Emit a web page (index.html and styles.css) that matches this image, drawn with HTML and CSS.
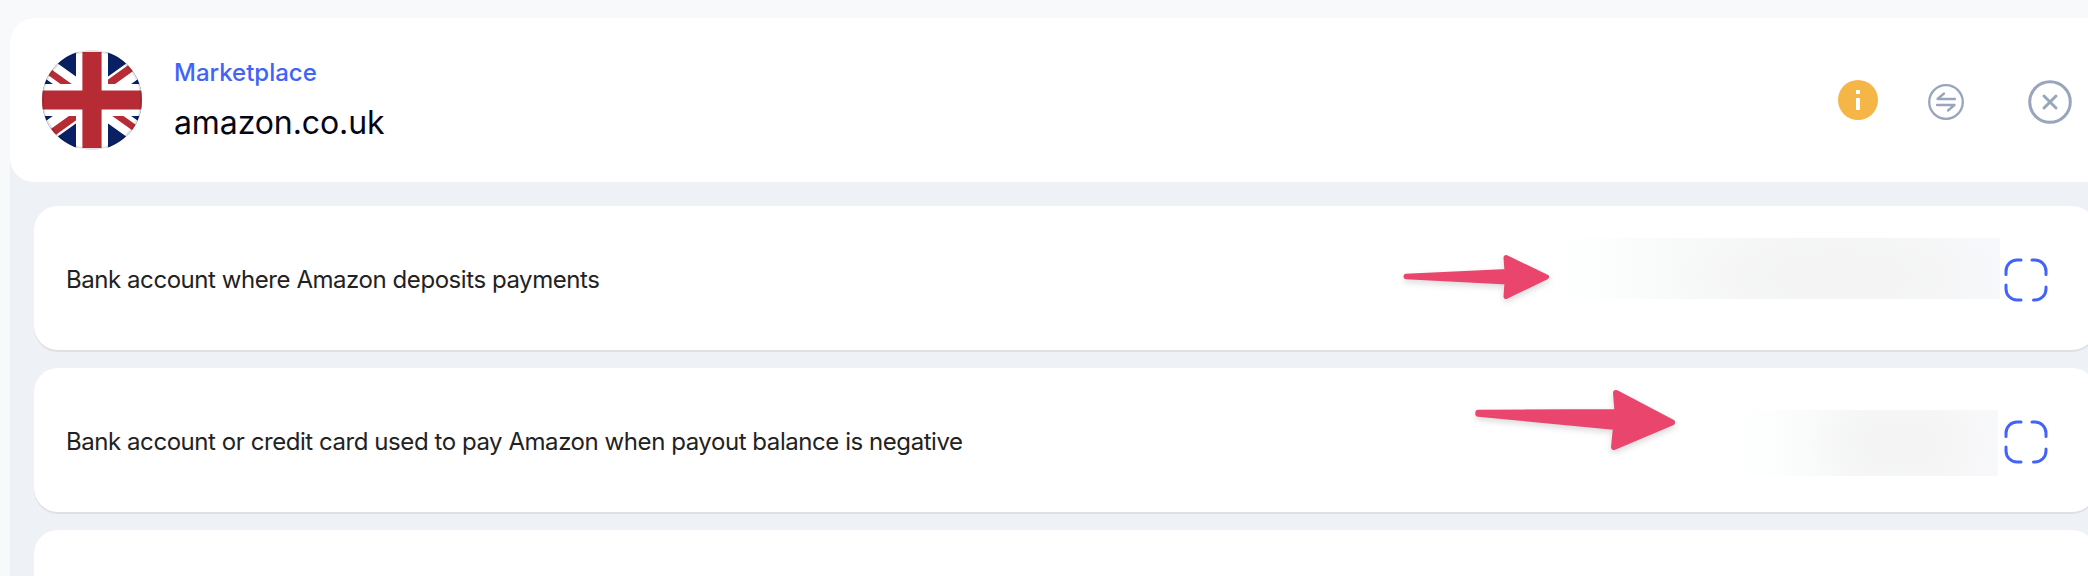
FILE: index.html
```
<!DOCTYPE html>
<html lang="en">
<head>
  <meta charset="UTF-8" />
  <meta name="viewport" content="width=device-width, initial-scale=1" />
  <title>Marketplace | amazon.co.uk</title>
  <link rel="stylesheet" href="styles.css">
</head>
<body>
  <main class="panel">
    <!-- Marketplace Header -->
    <header class="panel-header">
      <svg class="flag" viewBox="-50 -50 100 100">
        <defs>
          <clipPath id="flagClip"><circle r="50" /></clipPath>
        </defs>
        <g clip-path="url(#flagClip)">
          <rect x="-50" y="-50" width="100" height="100" fill="#fff" />
          <rect x="-50" y="-48" width="100" height="96" fill="#0a2065" />
          <path d="M-67.2-48L67.2 48M-67.2 48L67.2-48" stroke="#fff" stroke-width="19.4" />
          <g fill="#b72b34">
            <path d="M0-1.5L-60-44.4V-36.4L0 6.5z" />
            <path d="M0-9L60-51.9V-42.4L0 .5z" />
            <path d="M0-.5L-60 42.4V51.9L0 9z" />
            <path d="M0-6.5L60 36.4V44.4L0 1.5z" />
          </g>
          <path d="M-16-50H16V-16H50V16H16V50H-16V16H-50V-16H-16z" fill="#fff" />
          <path d="M-9.6-48H9.6V-9.6H50V9.6H9.6V48H-9.6V9.6H-50V-9.6H-9.6z" fill="#b72b34" />
        </g>
        <circle r="49" fill="none" stroke="#000" stroke-opacity="0.1" stroke-width="2" />
      </svg>

      <div class="title">
        <span class="title-label">Marketplace</span>
        <h1>amazon.co.uk</h1>
      </div>

      <div class="actions">
        <button class="icon-btn info" aria-label="Info">
          <svg width="40" height="40" viewBox="0 0 40 40">
            <circle cx="20" cy="20" r="20" fill="#f6b547" />
            <path d="M18 10h4v4h-4zM18 18h4v12h-4z" fill="#fff" />
          </svg>
        </button>
        <button class="icon-btn switch" aria-label="Switch marketplace">
          <svg width="36" height="36" viewBox="0 0 36 36">
            <circle cx="18" cy="18" r="16.8" />
            <path d="M27 15H9.5L16 9.5M9 21H26.5L20 26.5" />
          </svg>
        </button>
        <button class="icon-btn close" aria-label="Close">
          <svg width="44" height="44" viewBox="0 0 44 44">
            <circle cx="22" cy="22" r="20.3" />
            <path d="M16 16L28 28M28 16L16 28" />
          </svg>
        </button>
      </div>
    </header>

    <!-- Payment Methods -->
    <section class="cards">
      <div class="card">
        <span class="card-label">Bank account where Amazon deposits payments</span>
        <div class="hidden-value deposit"></div>
        <button class="icon-btn expand" aria-label="Expand">
          <svg width="44" height="44" viewBox="0 0 44 44">
            <path d="M17 2H13A11 11 0 0 0 2 13V16.5M28 2H31A11 11 0 0 1 42 13V16.5M2 27V31A11 11 0 0 0 13 42H17M42 29V31A11 11 0 0 1 31 42H29.5" />
          </svg>
        </button>
        <svg class="arrow arrow-deposit" width="150" height="60" viewBox="0 0 150 60">
          <path d="M4 28.300L105 23.500L104 9.500L144.500 29L104 48.500L105 34L4 28.700z" />
        </svg>
      </div>

      <div class="card">
        <span class="card-label">Bank account or credit card used to pay Amazon when payout balance is negative</span>
        <div class="hidden-value charge"></div>
        <button class="icon-btn expand" aria-label="Expand">
          <svg width="44" height="44" viewBox="0 0 44 44">
            <path d="M17 2H13A11 11 0 0 0 2 13V16.5M28 2H31A11 11 0 0 1 42 13V16.5M2 27V31A11 11 0 0 0 13 42H17M42 29V31A11 11 0 0 1 31 42H29.5" />
          </svg>
        </button>
        <svg class="arrow arrow-charge" width="210" height="66" viewBox="0 0 210 66">
          <path d="M8.300 24.700L147.500 24L146 5L202 34.500L144 59L146 39L8.300 25.700z" />
        </svg>
      </div>

      <div class="card"></div>
    </section>
  </main>
</body>
</html>
```
FILE: styles.css
```
* {
  box-sizing: border-box;
}

body {
  margin: 0;
  padding: 18px 0 0 10px;
  height: 100vh;
  overflow: hidden;
  font-family: Inter, "Liberation Sans", sans-serif;
  background: #f8f9fb;
  color: #222;
}

.panel {
  width: 2110px;
  height: calc(100vh - 18px);
  overflow: hidden;
  background: #eef1f6;
  border-radius: 24px 24px 0 0;
}

.panel-header {
  display: flex;
  align-items: center;
  height: 164px;
  padding: 0 48px 0 32px;
  background: #fff;
  border-radius: 24px;
}

.flag {
  width: 100px;
  height: 100px;
  margin-right: 32px;
}

.title {
  display: flex;
  flex-direction: column;
  gap: 12px;
  margin-bottom: 2px;
}

.title-label {
  font-size: 24px;
  line-height: 36px;
  font-weight: 500;
  color: #4263f9;
}

.title h1 {
  margin: 0;
  font-size: 32px;
  line-height: 40px;
  font-weight: 400;
  letter-spacing: -0.1px;
  color: #020617;
}

.actions {
  display: flex;
  align-items: center;
  margin-left: auto;
}

.icon-btn {
  display: flex;
  padding: 0;
  background: none;
  border: none;
  cursor: pointer;
}

.icon-btn svg {
  fill: none;
  stroke-linecap: round;
  stroke-linejoin: round;
}

.switch {
  margin: 4px 64px 0 50px;
}

.switch svg {
  stroke: #98a5bc;
  stroke-width: 2.3;
}

.close {
  margin-top: 4px;
}

.close svg {
  stroke: #98a5bc;
  stroke-width: 3;
}

.cards {
  display: flex;
  flex-direction: column;
  gap: 18px;
  padding: 24px 24px 0;
}

.card {
  position: relative;
  display: flex;
  align-items: center;
  height: 144px;
  padding: 0 48px 0 32px;
  background: #fff;
  border-radius: 24px;
  box-shadow: 0 2px 0 #dfe0e3;
}

.card-label {
  font-size: 24px;
  line-height: 36px;
  letter-spacing: -0.44px;
  margin-right: auto;
  padding-top: 3px;
}

.expand {
  margin: 4px 0 0 4px;
}

.expand svg {
  stroke: #4263f9;
  stroke-width: 3;
}

/* Masked account details */
.deposit {
  width: 470px;
  height: 61px;
  margin-bottom: 19px;
  background: radial-gradient(ellipse 170px 60px at 310px 38px, #f4f4f4 20%, rgba(244, 244, 244, 0) 100%),
              linear-gradient(90deg, #fff 0%, #fdfefe 14%, #f8f9f9 30%, #f6f7f7 50%, #f6f7f7 80%, #f7f8fb 100%);
}

.charge {
  width: 294px;
  height: 66px;
  margin: 6px 2px 0 0;
  background: radial-gradient(ellipse 90px 55px at 195px 34px, #f4f4f4 20%, rgba(244, 244, 244, 0) 100%),
              linear-gradient(90deg, #fff 0%, #fdfefe 22%, #f8f9f9 42%, #f6f7f7 55%, #f7f7f8 80%, #f7f8fb 100%);
}

/* Pointer arrows, drawn over the cards */
.arrow {
  position: absolute;
  fill: #ea466d;
  stroke: #ea466d;
  stroke-width: 5;
  stroke-linejoin: round;
  overflow: visible;
  filter: drop-shadow(0 3px 3px rgba(0, 0, 0, 0.15));
}

.arrow-deposit {
  left: 1368px;
  top: 42px;
}

.arrow-charge {
  left: 1436px;
  top: 20px;
  stroke-width: 6;
}
```
